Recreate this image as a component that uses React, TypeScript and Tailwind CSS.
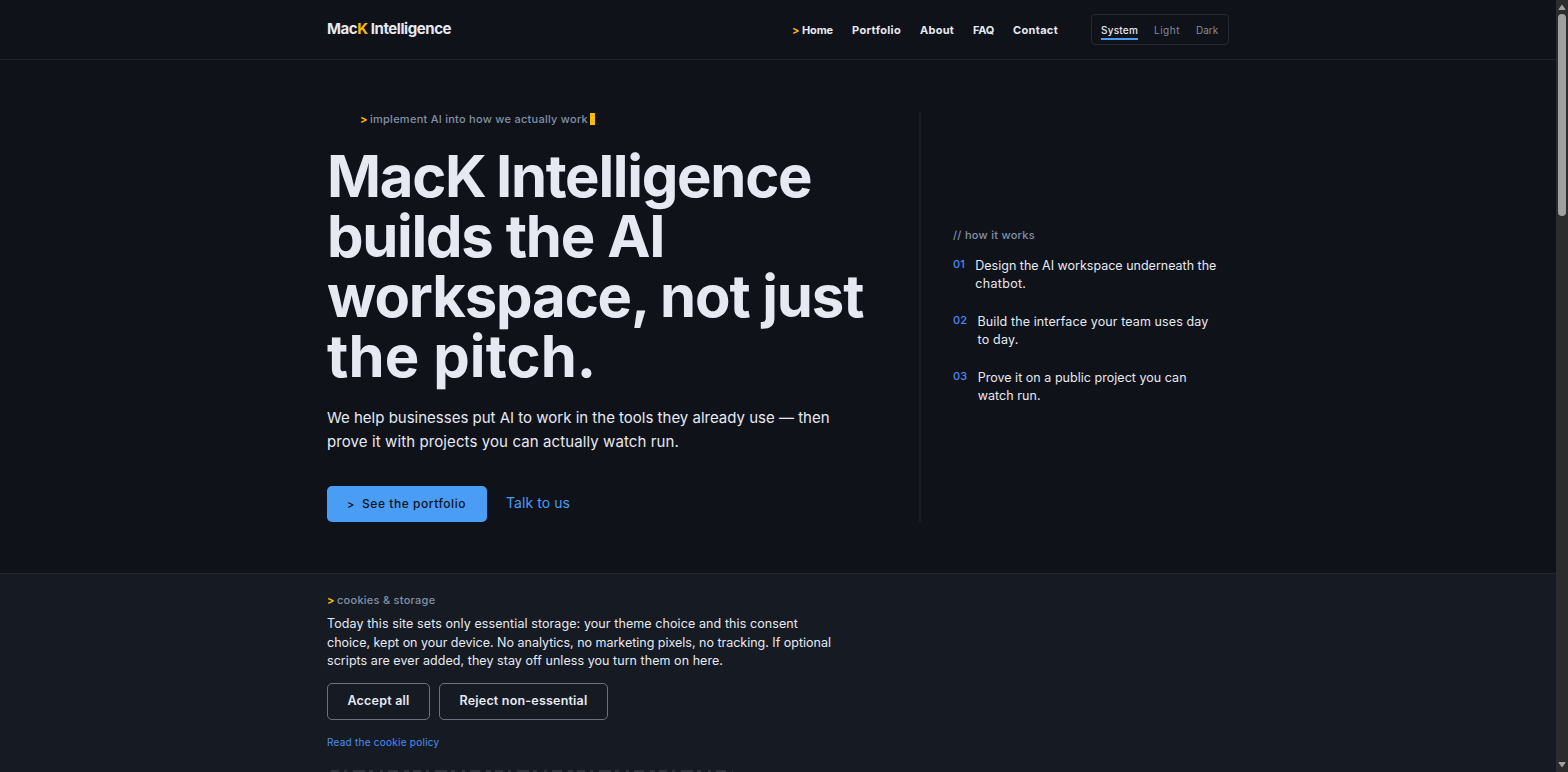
import clsx from "clsx";

const navLinks = [
    { label: "Portfolio", className: "w-[49px] tracking-[0.37px]" },
    { label: "About", className: "w-[34px] tracking-[0.25px]" },
    { label: "FAQ", className: "w-[21px] tracking-[-0.25px]" },
    { label: "Contact", className: "w-[45px] tracking-[0.33px]" },
];

const themes = [
    { label: "System", className: "w-[37px] tracking-[0.22px]", active: true },
    { label: "Light", className: "w-[26px] tracking-[0.52px]", active: false },
    { label: "Dark", className: "w-[22px]", active: false },
];

const headline = [
    { text: "MacK Intelligence", className: "tracking-[-1.28px] [word-spacing:-2px]" },
    { text: "builds the AI", className: "tracking-[-1.3px] [word-spacing:1px]" },
    { text: "workspace, not just", className: "tracking-[-1.13px]" },
    { text: "the pitch.", className: "tracking-[0.1px]" },
];

const steps = [
    {
        id: "01",
        lines: [
            { text: "Design the AI workspace underneath the", className: "tracking-normal" },
            { text: "chatbot.", className: "tracking-[0.31px]" },
        ],
    },
    {
        id: "02",
        lines: [
            { text: "Build the interface your team uses day", className: "tracking-[0.11px]" },
            { text: "to day.", className: "tracking-[0.2px]" },
        ],
    },
    {
        id: "03",
        lines: [
            { text: "Prove it on a public project you can", className: "tracking-[0.03px]" },
            { text: "watch run.", className: "tracking-[0.06px]" },
        ],
    },
];

const consent = [
    {
        text: "Today this site sets only essential storage: your theme choice and this consent",
        className: "tracking-[0.091px]",
    },
    {
        text: "choice, kept on your device. No analytics, no marketing pixels, no tracking. If optional",
        className: "tracking-[-0.007px]",
    },
    {
        text: "scripts are ever added, they stay off unless you turn them on here.",
        className: "tracking-[0.054px]",
    },
];

function Header() {
    return (
        <header className="h-[60px] shrink-0 border-b border-[#1e222b]">
            <div className="ml-[327px] flex h-[59px] w-[902px] items-center">
                <span className="text-[15px] font-bold tracking-[-0.43px] text-[#e6e9f2]">
                    Mac<span className="text-[#fbbc05]">K</span> Intelligence
                </span>

                <nav className="ml-auto flex items-center gap-[19px] pt-px text-[11px] font-bold text-[#e6e9f2]">
                    <a className="flex whitespace-nowrap">
                        <span className="w-[10px] leading-4 text-[#fbbc05]">&gt;</span>
                        <span className="w-[31px] leading-4 tracking-[-0.13px]">Home</span>
                    </a>
                    {navLinks.map((link) => (
                        <a key={link.label} className={clsx("leading-4 whitespace-nowrap", link.className)}>
                            {link.label}
                        </a>
                    ))}
                </nav>

                <div className="ml-[33px] flex h-[31px] w-[138px] items-center gap-4 rounded border border-[#262a33] pl-[9px] text-[10px]">
                    {themes.map((theme) => (
                        <button
                            key={theme.label}
                            className={clsx(
                                "mt-[3px] h-[17px] border-b-2 text-left leading-[14px] whitespace-nowrap",
                                theme.className,
                                theme.active
                                    ? "border-[#4a9df5] font-medium text-[#e6e9f2]"
                                    : "border-transparent text-[#828b9c]"
                            )}
                        >
                            {theme.label}
                        </button>
                    ))}
                </div>
            </div>
        </header>
    );
}

function Hero() {
    return (
        <section className="h-[513px] shrink-0 pt-[52px]">
            <div className="ml-[327px] flex h-[410px] w-[902px]">
                <div className="flex w-[592px] flex-col items-start">
                    <p className="-mt-px ml-[33px] flex h-4 items-center text-[11px] font-medium whitespace-nowrap text-[#8290a6]">
                        <span className="w-[10px] font-bold text-[#fbbc05]">&gt;</span>
                        <span className="w-[220px] tracking-[0.26px]">implement AI into how we actually work</span>
                        <span className="h-3 w-[5px] bg-[#fbbc05]" />
                    </p>

                    <h1 className="mt-[19px] text-[58px] leading-[60px] font-bold whitespace-nowrap text-[#e6e9f2]">
                        {headline.map((line) => (
                            <span key={line.text} className={clsx("block", line.className)}>
                                {line.text}
                            </span>
                        ))}
                    </h1>

                    <p className="mt-5 text-[15px] leading-6 whitespace-nowrap text-[#e6e9f2]">
                        We help businesses put AI to work in the tools they already use — then
                        <span className="block tracking-[0.1px]">
                            prove it with projects you can actually watch run.
                        </span>
                    </p>

                    <div className="mt-8 flex items-center gap-[19px]">
                        <button className="flex h-9 w-[160px] items-center rounded-[5px] bg-[#4a9df5] pl-5 text-left text-[12px] font-medium whitespace-nowrap text-[#0f1219]">
                            <span className="w-[15px] text-[11px]">&gt;</span>
                            <span className="tracking-[0.55px]">See the portfolio</span>
                        </button>
                        <a className="-mt-[3px] text-[14px] tracking-[0.06px] text-[#4a9df5]">Talk to us</a>
                    </div>
                </div>

                <aside className="flex flex-col border-l-2 border-[#191d25] pt-[115px] pl-8">
                    <p className="text-[11px] leading-4 font-medium tracking-[0.28px] text-[#8290a6]">
                        // how it works
                    </p>
                    <ol className="mt-[14px] flex flex-col gap-[21px]">
                        {steps.map((step) => (
                            <li key={step.id} className="flex gap-[10.5px] whitespace-nowrap">
                                <span className="text-[11px] leading-[15px] font-medium tracking-[0.06px] text-[#4a8df5]">
                                    {step.id}
                                </span>
                                <p className="text-[12.5px] leading-[17.5px] text-[#e6e9f2]">
                                    {step.lines.map((line) => (
                                        <span key={line.text} className={clsx("block", line.className)}>
                                            {line.text}
                                        </span>
                                    ))}
                                </p>
                            </li>
                        ))}
                    </ol>
                </aside>
            </div>
        </section>
    );
}

function CookieBanner() {
    return (
        <section className="flex flex-1 flex-col items-start border-t border-[#232831] bg-[#161b23] pt-[18px] pl-[327px]">
            <p className="flex h-4 items-center text-[11px] font-medium whitespace-nowrap text-[#8290a6]">
                <span className="w-[10px] font-bold text-[#fbbc05]">&gt;</span>
                <span className="tracking-[0.26px]">cookies &amp; storage</span>
            </p>

            <p className="mt-[7px] text-[12.5px] leading-[18.5px] whitespace-nowrap text-[#e6e9f2]">
                {consent.map((line) => (
                    <span key={line.text} className={clsx("block", line.className)}>
                        {line.text}
                    </span>
                ))}
            </p>

            <div className="mt-[12.5px] flex gap-[9px] text-[12.5px] font-semibold tracking-[0.2px] text-[#e6e9f2]">
                <button className="h-[37px] w-[103px] rounded-[5px] border border-[#6b7280]">Accept all</button>
                <button className="h-[37px] w-[169px] rounded-[5px] border border-[#6b7280]">
                    Reject non-essential
                </button>
            </div>

            <a className="mt-[14px] text-[10px] leading-4 tracking-[0.25px] text-[#4a8df5]">
                Read the cookie policy
            </a>

            {/* tips of the next section, cut off by the fold */}
            <svg className="mt-auto block" width="410" height="2" viewBox="0 0 410 2">
                <path
                    d="M4 1H406"
                    stroke="#2e333b"
                    strokeWidth="2"
                    strokeDasharray="8 5 3 6 12 4 4 7 3 5 10 6 5 4"
                />
            </svg>
        </section>
    );
}

function Scrollbar() {
    return (
        <div className="flex w-3 shrink-0 flex-col items-center bg-[#2c2c2c] pt-1 pb-1">
            <svg width="8" height="6" viewBox="0 0 8 6" fill="#9f9f9f">
                <path d="M4 0.5 7.5 5.2Q7.5 6 7 6H1Q0.5 6 0.5 5.2Z" />
            </svg>
            <div className="mt-1 h-[202px] w-2 rounded-full bg-[#9f9f9f]" />
            <svg className="mt-auto" width="8" height="6" viewBox="0 0 8 6" fill="#9f9f9f">
                <path d="M4 5.5 7.5 0.8Q7.5 0 7 0H1Q0.5 0 0.5 0.8Z" />
            </svg>
        </div>
    );
}

export default function App() {
    return (
        <div className="flex h-screen overflow-hidden bg-[#0f1219] font-['Inter',sans-serif]">
            <div className="flex min-w-0 flex-1 flex-col">
                <Header />
                <Hero />
                <CookieBanner />
            </div>
            <Scrollbar />
        </div>
    );
}
